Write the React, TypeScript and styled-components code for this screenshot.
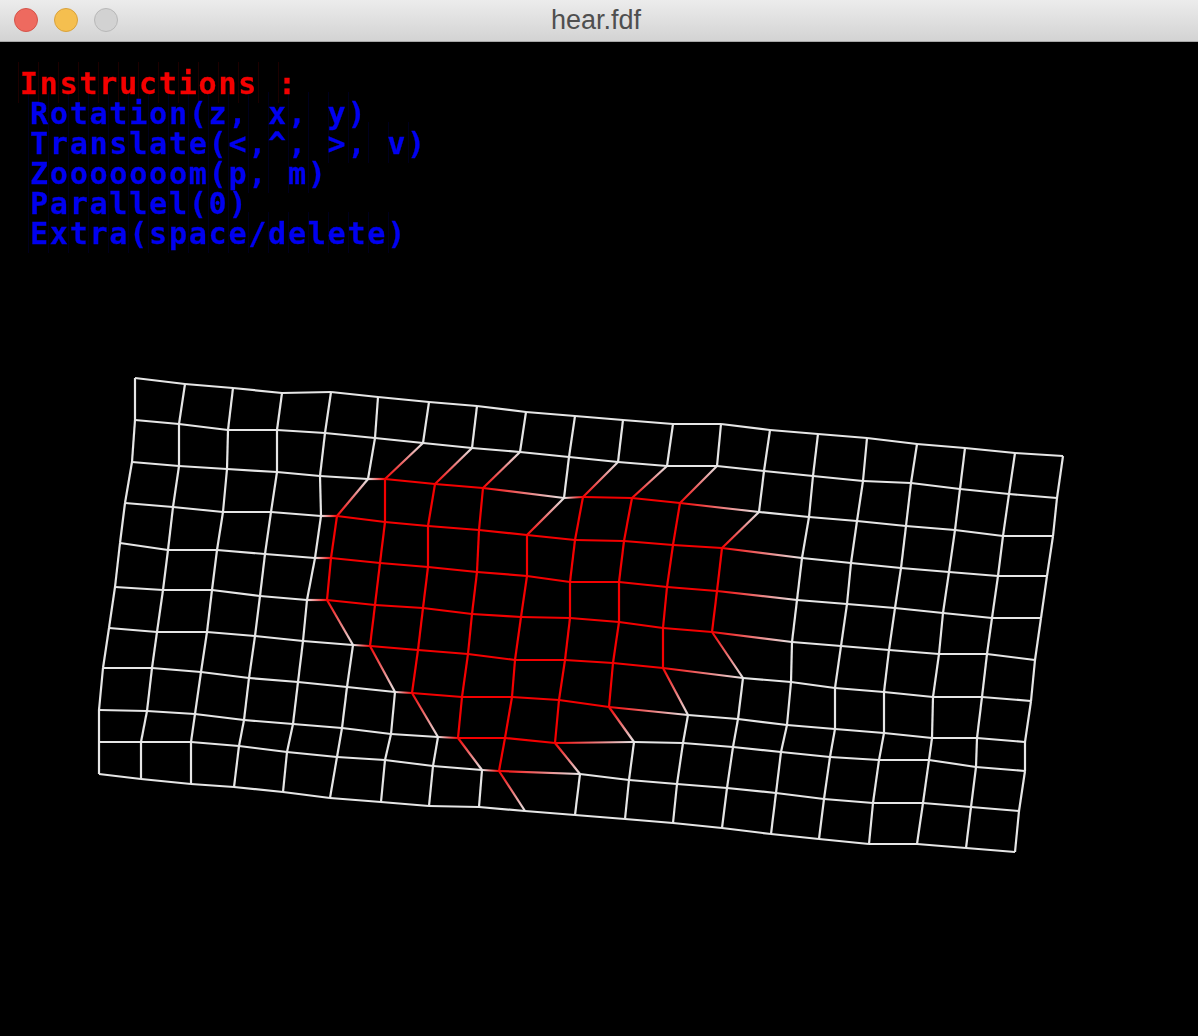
import React from 'react';
import styled, { createGlobalStyle } from 'styled-components';

const GlobalStyle = createGlobalStyle`
  html, body {
    margin: 0;
    padding: 0;
    background: #000;
    overflow: hidden;
  }
`;

const Window = styled.div`
  width: 1198px;
  height: 1036px;
  display: flex;
  flex-direction: column;
  background: #000;
`;

const TitleBar = styled.div`
  position: relative;
  height: 42px;
  flex: none;
  display: flex;
  align-items: center;
  justify-content: center;
  padding-right: 6px;
  box-sizing: border-box;
  background: linear-gradient(#ececec, #d3d3d3);
  border-bottom: 1px solid #a8a8a8;
`;

const Lights = styled.div`
  position: absolute;
  left: 14px;
  top: 8px;
  display: flex;
  gap: 16px;
`;

const Light = styled.span<{ $fill: string; $edge: string }>`
  width: 22px;
  height: 22px;
  border-radius: 50%;
  background: ${(p) => p.$fill};
  border: 1px solid ${(p) => p.$edge};
`;

const Title = styled.div`
  font-family: 'Liberation Sans', Arial, sans-serif;
  font-size: 27px;
  color: #4f4f4f;
`;

const Screen = styled.div`
  flex: 1;
  min-height: 0;
  display: flex;
  flex-direction: column;
`;

const Instructions = styled.div`
  flex: none;
  height: 180px;
  padding: 27px 0 0 20px;
  font-family: 'DejaVu Sans Mono', 'Liberation Mono', monospace;
  font-size: 30px;
  font-weight: 700;
  line-height: 30px;
  letter-spacing: 1.78px;
  white-space: pre;
  -webkit-text-stroke: 0.3px currentColor;
  filter: blur(0.35px);
`;

// faint column marks the text drawing leaves behind each glyph
const Line = styled.div<{ $color: string; $mark: string; $indent?: boolean; $chars: number }>`
  position: relative;
  color: ${(p) => p.$color};
  padding-left: ${(p) => (p.$indent ? 10 : 0)}px;

  &::before {
    content: '';
    position: absolute;
    left: ${(p) => (p.$indent ? 8 : -2)}px;
    top: -7px;
    bottom: -4px;
    width: ${(p) => p.$chars * 20}px;
    background: repeating-linear-gradient(
      90deg,
      ${(p) => p.$mark} 0 1px,
      transparent 1px 20px
    );
    z-index: -1;
  }
`;

const Wire = styled.svg`
  display: block;
  flex: 1;
  min-height: 0;
  width: 100%;
  filter: blur(0.2px);
`;

const NODES = [
  '135,378 185,384 233,388 282,393 331,392 378,397 429,402 477,406 526,412 575,416 623,420 673,424 721,424 770,430 818,434 867,438 917,444 965,448 1015,453 1063,456',
  '135,420 179,424 228,430 277,430 325,433 375,438 423,443 472,448 520,452 569,457 618,462 667,466 717,466 764,471 813,476 863,481 911,483 960,489 1009,494 1057,498',
  '132,462 179,466 227,469 277,472 320,476 368,479 385,479 435,484 483,488 564,498 583,497 632,498 680,503 759,512 809,517 857,521 906,526 955,530 1003,536 1053,536',
  '125,503 173,507 223,512 271,512 321,516 337,516 385,522 428,526 479,530 527,535 575,540 624,541 673,545 722,548 802,558 851,563 901,568 949,572 998,576 1047,576',
  '120,543 168,550 217,550 265,554 315,558 331,558 380,563 428,567 477,572 527,576 570,582 619,582 667,587 717,591 797,600 847,604 895,608 943,613 992,618 1041,618',
  '115,587 163,590 212,590 260,596 307,600 327,600 375,605 423,608 472,614 521,617 570,618 619,622 663,628 712,632 792,642 841,646 889,650 939,654 987,654 1035,660',
  '109,628 157,632 207,632 255,636 303,641 353,645 370,646 418,650 468,654 515,660 565,660 613,663 663,668 743,678 791,682 835,688 884,692 933,697 982,697 1031,701',
  '103,668 152,668 201,672 249,678 298,682 347,687 395,692 412,693 462,697 512,697 559,700 609,707 688,715 738,719 787,725 835,729 884,733 932,738 977,738 1025,742',
  '99,710 147,711 195,714 244,720 293,724 342,728 391,734 438,737 458,738 505,738 555,743 634,742 683,743 733,747 781,752 830,757 879,760 929,760 976,767 1025,771',
  '99,742 141,742 191,742 239,746 287,752 337,757 385,760 433,766 482,770 499,771 580,774 629,780 677,784 727,788 776,793 824,799 873,803 923,803 971,807 1019,811',
  '99,774 141,779 191,784 234,787 283,792 330,798 381,802 429,806 479,807 525,811 575,815 625,819 673,823 722,828 771,834 819,839 869,844 917,844 966,848 1015,852',
].map((row) => row.split(' ').map((pair) => pair.split(',').map(Number)));

// raised columns of each row, [from, to] inclusive
const RAISED: Record<number, number[][]> = {
  2: [[6, 8], [10, 12]],
  3: [[5, 13]],
  4: [[5, 13]],
  5: [[5, 13]],
  6: [[6, 12]],
  7: [[7, 11]],
  8: [[8, 10]],
  9: [[9, 9]],
};

const RED = '#f40000';
const WHITE = '#e6e6e6';

const isRaised = (r: number, c: number) =>
  (RAISED[r] || []).some(([from, to]) => c >= from && c <= to);

const buildEdges = () => {
  const edges: { id: string; a: number[]; b: number[]; ra: boolean; rb: boolean }[] = [];
  NODES.forEach((row, r) =>
    row.forEach((p, c) => {
      if (c < row.length - 1)
        edges.push({ id: `h${r}-${c}`, a: p, b: row[c + 1], ra: isRaised(r, c), rb: isRaised(r, c + 1) });
      if (r < NODES.length - 1)
        edges.push({ id: `v${r}-${c}`, a: p, b: NODES[r + 1][c], ra: isRaised(r, c), rb: isRaised(r + 1, c) });
    }),
  );
  return edges;
};

const EDGES = buildEdges();

const WireMesh = () => (
  <Wire viewBox="0 249 1198 787" preserveAspectRatio="xMinYMin">
    <defs>
      {EDGES.filter((e) => e.ra !== e.rb).map((e) => (
        <linearGradient key={e.id} id={e.id} gradientUnits="userSpaceOnUse" x1={e.a[0]} y1={e.a[1]} x2={e.b[0]} y2={e.b[1]}>
          <stop offset="0" stopColor={e.ra ? RED : WHITE} />
          <stop offset="1" stopColor={e.rb ? RED : WHITE} />
        </linearGradient>
      ))}
    </defs>
    {EDGES.map((e) => (
      <line
        key={e.id}
        x1={e.a[0]}
        y1={e.a[1]}
        x2={e.b[0]}
        y2={e.b[1]}
        strokeWidth={2.2}
        stroke={e.ra !== e.rb ? `url(#${e.id})` : e.ra ? RED : WHITE}
      />
    ))}
  </Wire>
);

const App = () => (
  <Window>
    <GlobalStyle />
    <TitleBar>
      <Lights>
        <Light $fill="#ee6a5f" $edge="#d5544a" />
        <Light $fill="#f5bf4f" $edge="#d9a23c" />
        <Light $fill="#d2d2d2" $edge="#b8b8b8" />
      </Lights>
      <Title>hear.fdf</Title>
    </TitleBar>
    <Screen>
      <Instructions>
        <Line $color="#f40000" $mark="#1c0000" $chars={14}>Instructions :</Line>
        <Line $color="#0000f0" $mark="#00001c" $indent $chars={17}>Rotation(z, x, y)</Line>
        <Line $color="#0000f0" $mark="#00001c" $indent $chars={20}>Translate(&lt;,^, &gt;, v)</Line>
        <Line $color="#0000f0" $mark="#00001c" $indent $chars={15}>Zooooooom(p, m)</Line>
        <Line $color="#0000f0" $mark="#00001c" $indent $chars={11}>Parallel(0)</Line>
        <Line $color="#0000f0" $mark="#00001c" $indent $chars={19}>Extra(space/delete)</Line>
      </Instructions>
      <WireMesh />
    </Screen>
  </Window>
);

export default App;
